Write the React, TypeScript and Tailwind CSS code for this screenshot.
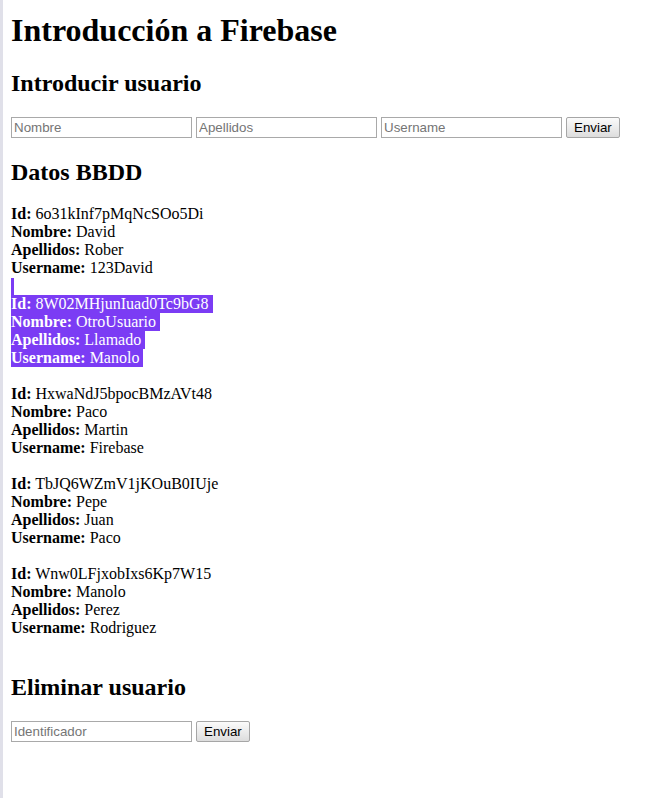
import React from "react";

type Rec = { id: string; nombre: string; apellidos: string; username: string };

const records: Rec[] = [
  { id: "6o31kInf7pMqNcSOo5Di", nombre: "David", apellidos: "Rober", username: "123David" },
  { id: "8W02MHjunIuad0Tc9bG8", nombre: "OtroUsuario", apellidos: "Llamado", username: "Manolo" },
  { id: "HxwaNdJ5bpocBMzAVt48", nombre: "Paco", apellidos: "Martin", username: "Firebase" },
  { id: "TbJQ6WZmV1jKOuB0IUje", nombre: "Pepe", apellidos: "Juan", username: "Paco" },
  { id: "Wnw0LFjxobIxs6Kp7W15", nombre: "Manolo", apellidos: "Perez", username: "Rodriguez" },
];

const inputCls =
  "w-[181px] h-[21px] border border-[#a9a9a9] px-[2px] text-[13.33px] font-['Liberation_Sans',Arial,sans-serif] text-black placeholder:text-[#757575] outline-none bg-white";
const btnCls =
  "h-[21px] px-[7px] border border-[#a6a6a6] rounded-[2px] bg-gradient-to-b from-[#fbfbfb] to-[#dddddd] text-[13.33px] font-['Liberation_Sans',Arial,sans-serif] text-black leading-none";

function Line({ label, value, sel }: { label: string; value: string; sel: boolean }) {
  return (
    <div className="h-[18px] leading-[18px]">
      <span className={sel ? "inline-block h-[18px] align-top bg-[#7b3cf4] text-white" : ""}>
        <b>{label}</b> {value}
        {sel ? "\u00a0" : ""}
      </span>
    </div>
  );
}

export default function App() {
  return (
    <div className="flex min-h-[798px] bg-white font-['Liberation_Serif','Times_New_Roman',serif] text-black text-[16px]">
      <div className="w-[3px] shrink-0 bg-[#e0e0e9]" />
      <div className="flex-1 pl-[8px] pt-[12px]">
        <h1 className="text-[32px] font-bold leading-[37px]">Introducción a Firebase</h1>
        <h2 className="mt-[20px] text-[24px] font-bold leading-[28px]">Introducir usuario</h2>
        <div className="mt-[20px] flex items-center gap-[4px] h-[21px]">
          <input className={inputCls} placeholder="Nombre" />
          <input className={inputCls} placeholder="Apellidos" />
          <input className={inputCls} placeholder="Username" />
          <button className={btnCls}>Enviar</button>
        </div>
        <h2 className="mt-[20px] text-[24px] font-bold leading-[28px]">Datos BBDD</h2>
        <div className="mt-[19px]">
          {records.map((r, i) => {
            const sel = i === 1;
            return (
              <div key={r.id}>
                <Line label="Id:" value={r.id} sel={sel} />
                <Line label="Nombre:" value={r.nombre} sel={sel} />
                <Line label="Apellidos:" value={r.apellidos} sel={sel} />
                <Line label="Username:" value={r.username} sel={sel} />
                <div className="h-[18px] pt-[1px]">
                  {i === 0 ? <div className="w-[3px] h-[18px] bg-[#7b3cf4]" /> : null}
                </div>
              </div>
            );
          })}
        </div>
        <h2 className="mt-[18px] text-[24px] font-bold leading-[28px]">Eliminar usuario</h2>
        <div className="mt-[20px] flex items-center gap-[4px] h-[21px]">
          <input className={inputCls} placeholder="Identificador" />
          <button className={btnCls}>Enviar</button>
        </div>
      </div>
    </div>
  );
}
